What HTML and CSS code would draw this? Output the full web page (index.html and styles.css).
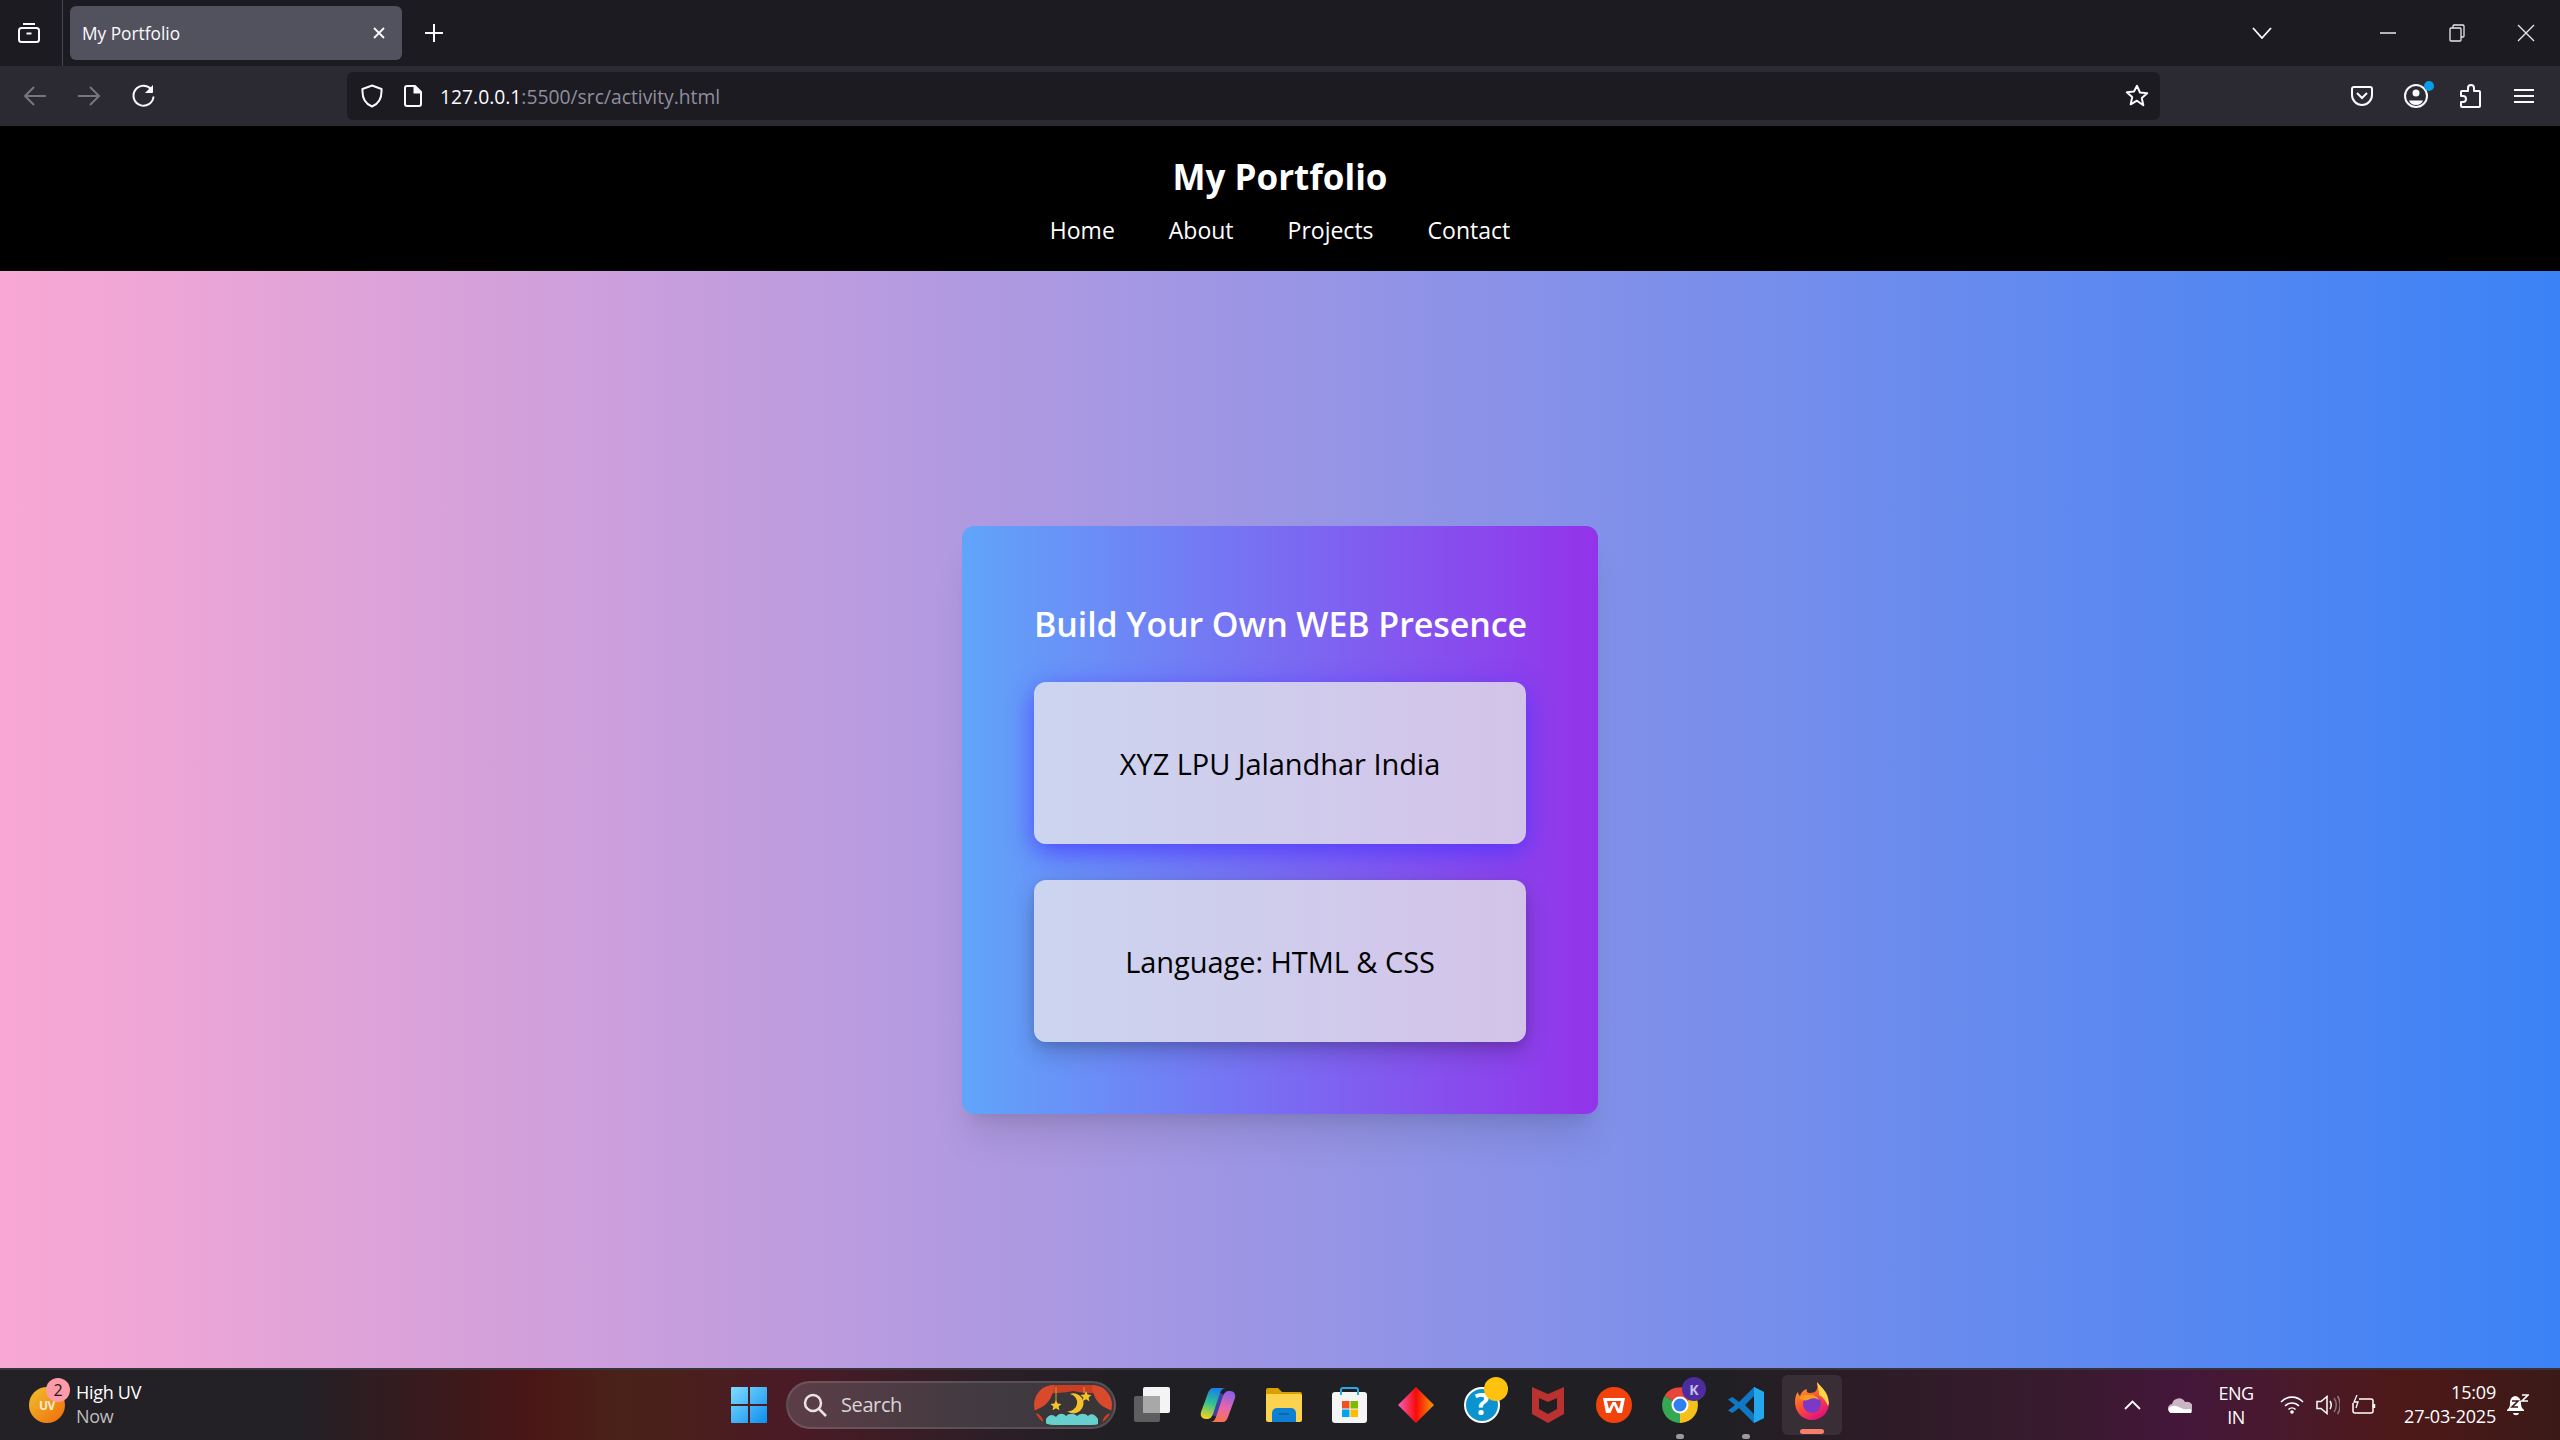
FILE: index.html
```html
<!DOCTYPE html>
<html lang="en">
<head>
<meta charset="utf-8">
<title>My Portfolio</title>
<link rel="stylesheet" href="styles.css">
</head>
<body>
<div class="browser">
  <div class="tabstrip">
    <div class="side-btn">
      <svg width="24" height="24" viewBox="0 0 24 24" fill="none" stroke="#fbfbfe" stroke-width="2"><path d="M6 3h12"/><rect x="2" y="7" width="20" height="14" rx="2.5"/><path d="M9.5 12.5h5"/></svg>
    </div>
    <div class="tab">
      <span class="tab-title">My Portfolio</span>
      <svg width="14" height="14" viewBox="0 0 14 14" stroke="#fbfbfe" stroke-width="1.8"><path d="M2 2l10 10M12 2L2 12"/></svg>
    </div>
    <div class="plus-btn">
      <svg width="20" height="20" viewBox="0 0 20 20" stroke="#fbfbfe" stroke-width="2"><path d="M10 1v18M1 10h18"/></svg>
    </div>
    <div class="strip-space"></div>
    <div class="list-btn">
      <svg width="20" height="12" viewBox="0 0 20 12" fill="none" stroke="#fbfbfe" stroke-width="1.8"><path d="M1 1l9 10 9-10"/></svg>
    </div>
    <div class="win-btn">
      <svg width="16" height="2" viewBox="0 0 16 2" stroke="#e8e8ea" stroke-width="1.5"><path d="M0 1h16"/></svg>
    </div>
    <div class="win-btn">
      <svg width="16" height="18" viewBox="0 0 16 18" fill="none" stroke="#e8e8ea" stroke-width="1.3"><rect x="1" y="4" width="11" height="13" rx="1"/><path d="M4 4V2a1 1 0 0 1 1-1h9a1 1 0 0 1 1 1v10a1 1 0 0 1-1 1h-2"/></svg>
    </div>
    <div class="win-btn">
      <svg width="18" height="18" viewBox="0 0 18 18" stroke="#e8e8ea" stroke-width="1.3"><path d="M1 1l16 16M17 1L1 17"/></svg>
    </div>
  </div>

  <div class="toolbar">
    <div class="nav-btn">
      <svg width="24" height="22" viewBox="0 0 24 22" fill="none" stroke="#77767f" stroke-width="2"><path d="M23 11H2M11 2l-9 9 9 9"/></svg>
    </div>
    <div class="nav-btn">
      <svg width="24" height="22" viewBox="0 0 24 22" fill="none" stroke="#77767f" stroke-width="2"><path d="M1 11h21M13 2l9 9-9 9"/></svg>
    </div>
    <div class="nav-btn">
      <svg width="24" height="24" viewBox="0 0 24 24" fill="none" stroke="#fbfbfe" stroke-width="2"><path d="M20 5a10 10 0 1 0 2.5 7.500"/><path d="M21.500 1.500v7h-7" fill="#fbfbfe" stroke-width="1"/></svg>
    </div>
    <div class="urlbar">
      <svg class="url-shield" width="22" height="24" viewBox="0 0 22 24" fill="none" stroke="#fbfbfe" stroke-width="2"><path d="M11 1.500 20.500 5c.5 8-2 14.500-9.500 17.500C3.500 19.500 1 13 1.500 5z"/></svg>
      <svg class="url-file" width="18" height="22" viewBox="0 0 18 22" fill="none" stroke="#fbfbfe" stroke-width="2"><path d="M3 1h8l6 6v12a2 2 0 0 1-2 2H3a2 2 0 0 1-2-2V3a2 2 0 0 1 2-2z"/><path d="M10.500 1v6.500H17" fill="#fbfbfe"/></svg>
      <span class="url-text"><span class="url-host">127.0.0.1</span>:5500/src/activity.html</span>
      <svg class="url-star" width="24" height="24" viewBox="0 0 24 24" fill="none" stroke="#fbfbfe" stroke-width="2" stroke-linejoin="round"><path d="M12 1.800l3 6.700 7.200.8-5.400 4.800 1.500 7.200L12 16.700l-6.300 3.600 1.500-7.200-5.400-4.800 7.200-.8z"/></svg>
    </div>
    <div class="nav-btn">
      <svg width="22" height="22" viewBox="0 0 22 22" fill="none" stroke="#fbfbfe" stroke-width="2"><path d="M3 2h16a2 2 0 0 1 2 2v6a10 10 0 0 1-20 0V4a2 2 0 0 1 2-2z"/><path d="M6 8l5 5 5-5"/></svg>
    </div>
    <div class="nav-btn account">
      <svg width="24" height="24" viewBox="0 0 24 24" fill="none" stroke="#fbfbfe" stroke-width="2"><circle cx="12" cy="12" r="11"/><circle cx="12" cy="9" r="3.500" fill="#fbfbfe" stroke="none"/><path d="M5 16.500h14c-1 3-4 4.500-7 4.500s-6-1.500-7-4.500z" fill="#fbfbfe" stroke="none"/></svg>
      <span class="account-dot"></span>
    </div>
    <div class="nav-btn">
      <svg width="22" height="24" viewBox="0 0 22 24" fill="none" stroke="#fbfbfe" stroke-width="2" stroke-linejoin="round"><path d="M9 7V4a3 3 0 0 1 6 0v3h5a1 1 0 0 1 1 1v14a1 1 0 0 1-1 1H3a1 1 0 0 1-1-1v-4h2a3 3 0 0 0 0-6H2V8a1 1 0 0 1 1-1z"/></svg>
    </div>
    <div class="nav-btn">
      <svg width="20" height="16" viewBox="0 0 20 16" stroke="#fbfbfe" stroke-width="2"><path d="M0 2h20M0 8h20M0 14h20"/></svg>
    </div>
  </div>
</div>

<header class="site-header">
  <h1 class="site-title">My Portfolio</h1>
  <nav class="site-nav">
    <a class="site-link">Home</a>
    <a class="site-link">About</a>
    <a class="site-link">Projects</a>
    <a class="site-link">Contact</a>
  </nav>
</header>

<main class="hero">
  <section class="panel">
    <h2 class="panel-title">Build Your Own WEB Presence</h2>
    <div class="info info-first">XYZ LPU Jalandhar India</div>
    <div class="info info-second">Language: HTML &amp; CSS</div>
  </section>
</main>

<footer class="taskbar">
  <div class="widget">
    <div class="uv-icon"><span class="uv-label">UV</span><span class="uv-badge">2</span></div>
    <div class="widget-text">
      <span class="widget-main">High UV</span>
      <span class="widget-sub">Now</span>
    </div>
  </div>

  <div class="apps">
    <div class="app">
      <svg width="36" height="36" viewBox="0 0 36 36"><defs><linearGradient id="win" x1="0" y1="0" x2="1" y2="1"><stop offset="0" stop-color="#7fdcff"/><stop offset="1" stop-color="#0c8fef"/></linearGradient></defs><path fill="url(#win)" d="M1 0h16v17H0V1a1 1 0 0 1 1-1zM19 0h16a1 1 0 0 1 1 1v16H19zM0 19h17v17H1a1 1 0 0 1-1-1zM19 19h17v16a1 1 0 0 1-1 1H19z"/></svg>
    </div>
    <div class="search">
      <svg class="search-icon" width="24" height="24" viewBox="0 0 24 24" fill="none" stroke="#e8e4e6" stroke-width="2.500"><circle cx="10" cy="10" r="8"/><path d="M16 16l7 7"/></svg>
      <span class="search-text">Search</span>
      <svg class="search-art" width="78" height="40" viewBox="0 0 78 40">
        <defs><clipPath id="pill"><rect width="78" height="40" rx="20"/></clipPath></defs>
        <g clip-path="url(#pill)">
          <rect width="78" height="40" fill="#3a3638"/>
          <path d="M0 0h78v5c-12 4-24 4-39 1C24 9 12 9 0 5z" fill="#c93f26"/>
          <path d="M0 0h20c0 10-6 19-12 22L0 26z" fill="#d9492c"/>
          <path d="M78 0H58c0 10 6 19 12 22l8 4z" fill="#d9492c"/>
          <path d="M0 28c5 0 9 3 10 12H0zM78 28c-5 0-9 3-10 12h10z" fill="#c93f26"/>
          <path d="M12 40v-6c3-5 7-5 10-2 3-4 7-4 10-1 3-3 8-3 11 0 4-3 8-3 11 0 3-3 7-2 10 3v6z" fill="#68cfcf"/>
          <path d="M22 2v14M50 2v6" stroke="#c9a53a" stroke-width="1"/>
          <path d="M22 15l1.600 3.500 3.900.4-2.900 2.600.8 3.800-3.400-2-3.400 2 .8-3.800-2.900-2.600 3.900-.4zM52 6l1.600 3.500 3.900.4-2.900 2.600.8 3.800-3.400-2-3.400 2 .8-3.800-2.900-2.600 3.900-.4z" fill="#f5c22a"/>
          <path d="M36 9a10 10 0 1 1 -3 17a8.500 8.500 0 0 0 3-17z" fill="#f5c22a"/>
        </g>
      </svg>
    </div>
    <div class="app">
      <svg width="36" height="36" viewBox="0 0 36 36"><rect x="0" y="9" width="26" height="26" rx="2" fill="#5e5e60"/><rect x="9" y="0" width="27" height="26" rx="2" fill="#f4f4f4"/><rect x="9" y="9" width="17" height="17" fill="#a8a8a8"/></svg>
    </div>
    <div class="app">
      <svg width="36" height="36" viewBox="0 0 36 36"><defs><linearGradient id="cp1" x1=".5" y1="0" x2=".3" y2="1"><stop offset="0" stop-color="#1a7fe8"/><stop offset=".5" stop-color="#30c48d"/><stop offset="1" stop-color="#f6d320"/></linearGradient><linearGradient id="cp2" x1=".7" y1="0" x2=".4" y2="1"><stop offset="0" stop-color="#8a5fe8"/><stop offset=".55" stop-color="#e967a8"/><stop offset="1" stop-color="#f9744b"/></linearGradient></defs><path d="M19 5l5 3-7 22-5-2z" fill="#3f3fa8"/><path d="M13 1h13c-3 0-5 2-6 5l-7 21c-1 3-3 5-6 5H6c-4 0-6-3-5-7l7-19c1-3 3-5 5-5z" fill="url(#cp1)"/><path d="M23 35H10c3 0 5-2 6-5l7-21c1-3 3-5 6-5h1c4 0 6 3 5 7l-7 19c-1 3-3 5-5 5z" fill="url(#cp2)"/></svg>
    </div>
    <div class="app">
      <svg width="36" height="36" viewBox="0 0 36 36"><path d="M0 3a2 2 0 0 1 2-2h10l4 4h18a2 2 0 0 1 2 2v4H0z" fill="#d9a100"/><path d="M0 7h34a2 2 0 0 1 2 2v24a2 2 0 0 1-2 2H2a2 2 0 0 1-2-2z" fill="#fcd34f"/><path d="M6 26a5 5 0 0 1 5-5h14a5 5 0 0 1 5 5v9H6z" fill="#0f7fd4"/><path d="M13 27h10" stroke="#0a5ea0" stroke-width="1.500"/></svg>
    </div>
    <div class="app">
      <svg width="36" height="36" viewBox="0 0 36 36"><rect y="5" width="35" height="31" rx="3" fill="#f5f5f5"/><path d="M9 8V3a2 2 0 0 1 2-2h13a2 2 0 0 1 2 2v5" fill="none" stroke="#28a8ea" stroke-width="2"/><rect x="10" y="14" width="7.500" height="7.500" fill="#f25022"/><rect x="18.500" y="14" width="7.500" height="7.500" fill="#7fba00"/><rect x="10" y="22.500" width="7.500" height="7.500" fill="#00a4ef"/><rect x="18.500" y="22.500" width="7.500" height="7.500" fill="#ffb900"/></svg>
    </div>
    <div class="app">
      <svg width="36" height="36" viewBox="0 0 36 36"><defs><linearGradient id="dia" x1="0" x2="1"><stop offset="0" stop-color="#f062c0"/><stop offset=".5" stop-color="#f80a0a"/><stop offset="1" stop-color="#f59a00"/></linearGradient></defs><path d="M18 0l18 18-18 18L0 18z" fill="url(#dia)"/></svg>
    </div>
    <div class="app">
      <svg class="help-icon" width="36" height="40" viewBox="0 0 36 40"><circle cx="18" cy="22" r="17" fill="#0b93cf" stroke="#fff" stroke-width="2"/><text class="help-mark" x="18" y="32" text-anchor="middle">?</text></svg>
      <span class="help-dot"></span>
    </div>
    <div class="app">
      <svg width="32" height="36" viewBox="0 0 32 36"><path d="M0 0l16 7 16-7v27l-16 9L0 27z" fill="#b9322f"/><path d="M7 11l9 4 9-4v11l-9 5-9-5z" fill="#201f24"/></svg>
    </div>
    <div class="app">
      <svg width="36" height="36" viewBox="0 0 36 36"><circle cx="18" cy="18" r="18" fill="#f2420c"/><path d="M7 11h22l-3 15h-4.500L18 18l-3.500 8H10zM11 14l2 8 3.500-7h3l3.500 7 2-8z" fill="#fff" fill-rule="evenodd"/></svg>
    </div>
    <div class="app app-running">
      <svg width="36" height="36" viewBox="0 0 36 36"><path d="M18 18L2.500 9A18 18 0 0 1 33.500 9z" fill="#e8453c"/><path d="M18 18L33.500 9A18 18 0 0 1 18 36z" fill="#f7c018"/><path d="M18 18L18 36A18 18 0 0 1 2.500 9z" fill="#34a853"/><circle cx="18" cy="18" r="8.500" fill="#fff"/><circle cx="18" cy="18" r="6.500" fill="#2f7ff0"/></svg>
      <span class="chrome-badge">K</span>
    </div>
    <div class="app app-running">
      <svg width="36" height="36" viewBox="0 0 36 36"><path d="M26 0l10 5v26l-10 5L11 21l-6.500 5L0 23.500 7 18 0 12.500 4.500 10 11 15z" fill="#0f78c4"/><path d="M26 0l10 5v26l-10 5z" fill="#25a7ee"/><path d="M26 9l-9 9 9 9z" fill="#201f24"/></svg>
    </div>
    <div class="app-active">
      <svg width="34" height="38" viewBox="0 0 34 38"><defs><linearGradient id="ff" x1="0" y1="0" x2=".6" y2="1"><stop offset="0" stop-color="#ffbd2e"/><stop offset=".5" stop-color="#ff5a2b"/><stop offset="1" stop-color="#e3127b"/></linearGradient></defs><path d="M22 0c2 4 6 6 9 11 3 4 3 8 3 10 0 9-7 17-17 17S0 30 0 20c0-4 1-8 3-10 0 2 1 3 2 4 1-3 3-6 7-7-1 3 1 4 3 4 3 0 6-1 7-4 1-3 0-5 0-7z" fill="url(#ff)"/><path d="M22 0c4 5 10 9 11 17 1 3 1 5 0 7-2-5-5-9-9-11 0-4-1-8-2-13z" fill="#ffd54a"/><circle cx="17" cy="22" r="9" fill="#7b38c9"/><path d="M4 16c3-3 8-4 12-3 4 0 7 2 8 5-3-2-6-2-9-1-3 2-7 2-11-1z" fill="#ff9a1f"/></svg>
      <span class="active-bar"></span>
    </div>
  </div>

  <div class="tray">
    <svg class="tray-chevron" width="17" height="10" viewBox="0 0 17 10" fill="none" stroke="#fff" stroke-width="1.800"><path d="M1 9l7.500-7.500L16 9"/></svg>
    <svg class="tray-cloud" width="24" height="16" viewBox="0 0 24 16"><path d="M5 16a4.500 4.500 0 0 1-1-9 7 7 0 0 1 13-2 5.500 5.500 0 0 1 4 11z" fill="#c9b5c4"/><path d="M3 16c-2.500-1-3.500-4-1-6 5-3 9 0 11 1 3 2 6 1 9 1 2 1 2 3 1 4z" fill="#fff"/></svg>
    <div class="lang"><span>ENG</span><span>IN</span></div>
    <svg class="tray-wifi" width="24" height="18" viewBox="0 0 24 18" fill="none" stroke="#fff" stroke-width="1.600"><path d="M1 6c6-6.500 16-6.500 22 0M5 10c4-4 10-4 14 0M8.500 13.500c2-2 5-2 7 0"/><circle cx="12" cy="16" r="1.800" fill="#fff" stroke="none"/></svg>
    <svg class="tray-sound" width="24" height="20" viewBox="0 0 24 20" fill="none" stroke="#fff" stroke-width="1.500"><path d="M1 6.500h4l6-5v17l-6-5H1z"/><path d="M14 6c1.500 2.500 1.500 5.500 0 8" /><path d="M18 3c3 4 3 10 0 14M21.500 1c3.500 5 3.500 13 0 18" stroke="#8a7380"/></svg>
    <svg class="tray-battery" width="24" height="20" viewBox="0 0 24 20" fill="none" stroke="#fff" stroke-width="1.500"><path d="M7 4h12a2 2 0 0 1 2 2v10a2 2 0 0 1-2 2H3a2 2 0 0 1-2-2V8"/><path d="M22 9v4" stroke-width="2.500"/><path d="M5 0L2 7h4l-2 6" stroke-width="1.300"/></svg>
    <div class="clock"><span>15:09</span><span>27-03-2025</span></div>
    <svg class="tray-bell" width="22" height="24" viewBox="0 0 22 24"><path d="M8 3c-4 1-5 4-5 7 0 4-1 5-3 7v1h17v-1c-2-2-3-3-3-7 0-4-3-7-6-7z" fill="#fff"/><path d="M6 20h6c-.5 3-5.500 3-6 0z" fill="#fff"/><path d="M5 8h6l-6 6h6" fill="none" stroke="#3a1a18" stroke-width="1.600"/><path d="M15 2h6l-6 6h6" fill="none" stroke="#fff" stroke-width="1.600"/></svg>
  </div>
</footer>
</body>
</html>
```

FILE: styles.css
```css
* { box-sizing: border-box; }

html, body { height: 100%; }

body {
  margin: 0;
  display: flex;
  flex-direction: column;
  height: 100vh;
  overflow: hidden;
  font-family: "Open Sans", "Noto Sans", "Liberation Sans", sans-serif;
  background: #000;
}

/* browser chrome */
.browser { flex: none; }

.tabstrip {
  display: flex;
  align-items: center;
  height: 66px;
  background: #1c1b22;
}

.side-btn {
  width: 63px;
  height: 66px;
  display: flex;
  align-items: center;
  justify-content: center;
  padding-right: 4px;
  border-right: 1px solid #45454d;
}

.tab {
  width: 332px;
  height: 54px;
  margin-left: 7px;
  padding: 0 16px 0 12px;
  display: flex;
  align-items: center;
  justify-content: space-between;
  background: #52525e;
  border-radius: 6px;
}

.tab-title {
  color: #fbfbfe;
  font-size: 17.3px;
}

.plus-btn {
  width: 64px;
  display: flex;
  justify-content: center;
}

.strip-space { flex: 1; }

.list-btn {
  width: 54px;
  display: flex;
  justify-content: center;
  margin-right: 64px;
}

.win-btn {
  width: 69px;
  display: flex;
  justify-content: center;
}

.toolbar {
  display: flex;
  align-items: center;
  height: 60px;
  padding: 0 9px 0 8px;
  background: #2b2a33;
}

.nav-btn {
  position: relative;
  width: 54px;
  display: flex;
  justify-content: center;
}

.urlbar {
  flex: 1;
  height: 48px;
  margin: 0 175px 0 177px;
  padding: 0 11px 0 14px;
  display: flex;
  align-items: center;
  background: #1c1b22;
  border-radius: 6px;
}

.url-file { margin-left: 21px; }

.url-text {
  margin-left: 18px;
  flex: 1;
  color: #8f8f9d;
  font-size: 19.3px;
}

.url-host { color: #fbfbfe; }

.account-dot {
  position: absolute;
  top: -3px;
  left: 35px;
  width: 10px;
  height: 10px;
  border-radius: 50%;
  background: #0a9dea;
}

/* site header */
.site-header {
  flex: none;
  height: 145px;
  padding-top: 24px;
  text-align: center;
  color: #fff;
  background: #000;
}

.site-title {
  margin: 0;
  font-size: 35px;
  line-height: 54px;
  font-weight: 700;
}

.site-nav {
  display: flex;
  justify-content: center;
  gap: 54px;
  margin-top: 8px;
}

.site-link {
  font-size: 23px;
  line-height: 36px;
}

/* hero */
.hero {
  flex: 1;
  display: flex;
  align-items: center;
  justify-content: center;
  background: linear-gradient(to right, #f9a8d4, #3b82f6);
}

.panel {
  width: 636px;
  padding: 72px;
  background: linear-gradient(to right, #60a5fa, #9333ea);
  border-radius: 12px;
  box-shadow: 0 30px 37px -7px rgba(0, 0, 0, .1), 0 12px 15px -9px rgba(0, 0, 0, .1);
}

.panel-title {
  margin: 0 0 36px;
  padding-top: 2px;
  height: 48px;
  color: #fff;
  font-size: 34px;
  line-height: 48px;
  font-weight: 600;
  text-align: center;
  white-space: nowrap;
  letter-spacing: -0.1px;
}

.info {
  height: 162px;
  padding-top: 2px;
  display: flex;
  align-items: center;
  justify-content: center;
  color: #000;
  font-size: 29px;
  letter-spacing: -0.05px;
  background: linear-gradient(to right, #ccd5ef, #d3c3e9);
  border-radius: 12px;
}

.info-first {
  margin-bottom: 36px;
  box-shadow: 0 8px 26px rgba(70, 50, 255, .75);
}

.info-second {
  box-shadow: 0 10px 24px rgba(0, 0, 0, .2), 0 4px 10px rgba(0, 0, 0, .1);
}

/* taskbar */
.taskbar {
  flex: none;
  height: 72px;
  display: flex;
  align-items: center;
  border-top: 2px solid #36343a;
  background: linear-gradient(to right, #232026 0, #232026 300px, #4a1616 530px, #4a2218 620px, #4a1a26 800px, #2a1f26 1010px, #201f24 1120px, #201f24 1720px, #2c1c26 1860px, #3a1a30 2080px, #44163a 2180px, #4a1a2a 2300px, #4e1818 2400px, #3a1a18 2560px);
  font-family: "Open Sans", "Noto Sans", sans-serif;
  color: #fff;
}

.widget {
  width: 716px;
  padding-left: 29px;
  display: flex;
  align-items: center;
  gap: 11px;
}

.uv-icon {
  position: relative;
  width: 36px;
  height: 36px;
  display: flex;
  align-items: center;
  justify-content: center;
  border-radius: 50%;
  background: linear-gradient(135deg, #eec22c, #f26a0a);
}

.uv-label {
  font-size: 12px;
  font-weight: 700;
  color: #fbeecf;
  letter-spacing: -0.4px;
}

.uv-badge {
  position: absolute;
  top: -9px;
  right: -5px;
  width: 24px;
  height: 24px;
  display: flex;
  align-items: center;
  justify-content: center;
  color: #1a1a1a;
  font-size: 16px;
  border-radius: 50%;
  background: #ff9aa8;
}

.widget-text {
  display: flex;
  flex-direction: column;
  margin-top: -2px;
  font-size: 18px;
  line-height: 24px;
  letter-spacing: -0.3px;
}

.widget-main { color: #fff; }
.widget-sub { color: #bdbdbd; }

.apps {
  display: flex;
  align-items: center;
}

.app {
  position: relative;
  width: 66px;
  height: 60px;
  display: flex;
  align-items: center;
  justify-content: center;
}

.search {
  width: 330px;
  height: 48px;
  margin: 0 3px 0 4px;
  padding: 0 2px 0 15px;
  display: flex;
  align-items: center;
  border: 2px solid rgba(255, 255, 255, .12);
  border-radius: 24px;
  background: linear-gradient(to right, #5c3d47, #413a40 60%, #3c383d);
}

.search-text {
  flex: 1;
  margin: -2px 0 0 14px;
  font-size: 20px;
  color: #d9d5d7;
  letter-spacing: -0.4px;
}

.help-icon { margin-top: -4px; }

.help-mark {
  font-size: 30px;
  font-weight: 700;
  fill: #fff;
}

.help-dot {
  position: absolute;
  top: 2px;
  left: 35px;
  width: 24px;
  height: 24px;
  border-radius: 50%;
  background: #ffc20e;
}

.app-running::after {
  content: "";
  position: absolute;
  bottom: -4px;
  left: 29px;
  width: 8px;
  height: 5px;
  border-radius: 3px;
  background: #9a9a9e;
}

.chrome-badge {
  position: absolute;
  top: 2px;
  left: 35px;
  width: 24px;
  height: 24px;
  display: flex;
  align-items: center;
  justify-content: center;
  font-size: 14px;
  font-weight: 700;
  color: #c8bde8;
  border-radius: 50%;
  background: #4b2da0;
}

.app-active {
  position: relative;
  width: 60px;
  height: 60px;
  margin-left: 3px;
  display: flex;
  align-items: center;
  justify-content: center;
  padding-bottom: 8px;
  border-radius: 6px;
  background: rgba(255, 255, 255, .08);
}

.active-bar {
  position: absolute;
  bottom: 1px;
  left: 18px;
  width: 24px;
  height: 5px;
  border-radius: 3px;
  background: #f47f6b;
}

.tray {
  flex: 1;
  display: flex;
  align-items: center;
  justify-content: flex-end;
  padding-right: 31px;
  font-size: 18px;
  line-height: 24px;
}

.tray-chevron { margin-right: 27px; }
.tray-cloud { margin-right: 26px; }
.tray-wifi { margin-left: 26px; }
.tray-sound { margin-left: 12px; }
.tray-battery { margin-left: 12px; }
.tray-bell { margin-left: 11px; }

.lang {
  display: flex;
  flex-direction: column;
  align-items: center;
  width: 36px;
  letter-spacing: -0.5px;
}

.clock {
  display: flex;
  flex-direction: column;
  align-items: flex-end;
  margin: -2px 0 0 24px;
  width: 96px;
  letter-spacing: -0.2px;
}
```
